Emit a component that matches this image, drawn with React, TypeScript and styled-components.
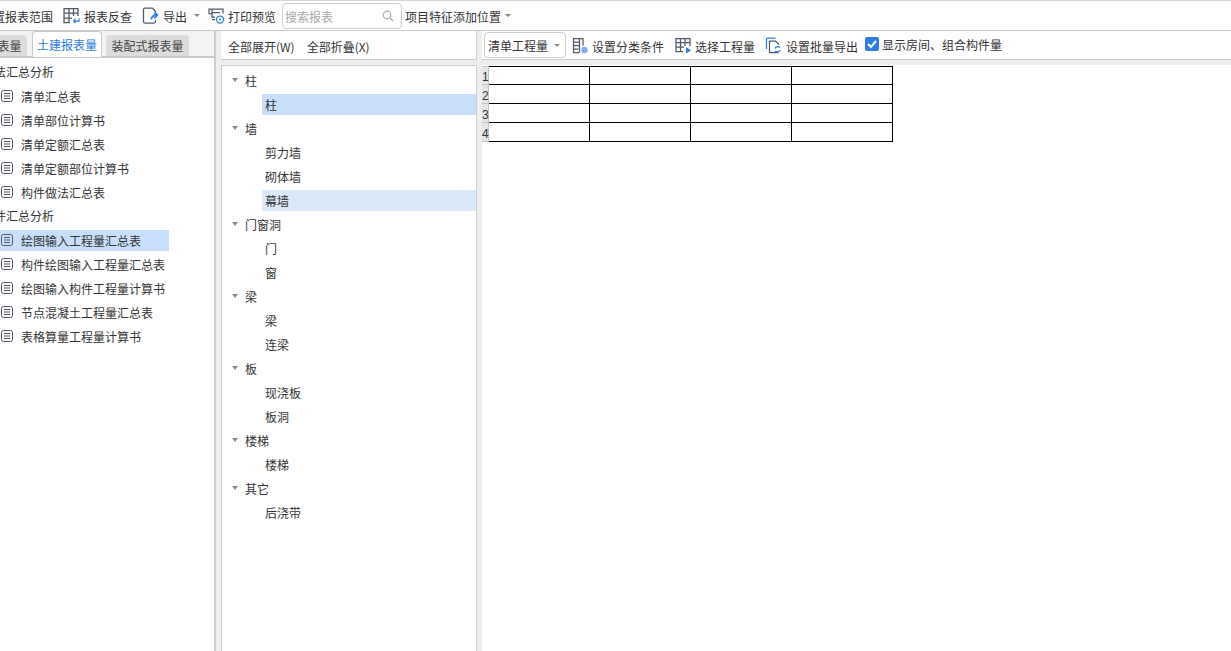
import React from "react";
import styled, { createGlobalStyle } from "styled-components";

const Global = createGlobalStyle`
  html, body { margin: 0; padding: 0; background: #fff; }
  * { box-sizing: border-box; }
  body { font-family: "Noto Sans CJK SC", "Liberation Sans", sans-serif; font-size: 12px; color: #333; }
`;

const Page = styled.div`
  width: 1231px; height: 651px; overflow: hidden; display: flex; flex-direction: column; background: #fff;
`;
const TopBar = styled.div`
  height: 30px; flex: none; display: flex; align-items: center;
  border-top: 1px solid #d4d4d4; margin-left: -19px; white-space: nowrap;
`;
const ToolText = styled.span<{ $ml?: number; $mr?: number; $mt?: number }>`
  margin-left: ${p => p.$ml ?? 0}px; margin-right: ${p => p.$mr ?? 0}px; margin-top: ${p => p.$mt ?? 2}px; line-height: 16px; color: #333;
`;
const ToolIcon = styled.svg<{ $ml?: number }>`
  width: 17px; height: 17px; flex: none; margin-left: ${p => p.$ml ?? 0}px;
  fill: none; stroke: #50586a; stroke-width: 1.25;
`;
const Caret = styled.i<{ $ml?: number }>`
  display: block; width: 0; height: 0; flex: none; margin-left: ${p => p.$ml ?? 0}px;
  border: 3px solid transparent; border-top: 3px solid #888; border-bottom: 0;
`;
const Search = styled.div`
  width: 120px; height: 26px; margin-left: 6px; flex: none; display: flex; align-items: center; justify-content: space-between;
  padding: 1px 7px 0 2px; border: 1px solid #ccc; border-radius: 4px; color: #aaa;
`;
const Body = styled.div`
  flex: 1; display: flex; background: #eee; border-top: 1px solid #c8cacd; min-height: 0;
`;
const Left = styled.div`
  width: 216px; flex: none; display: flex; flex-direction: column; background: #fff; overflow: hidden;
  border-right: 2px solid #cdcdcd;
`;
const Tabs = styled.div`
  height: 27px; flex: none; display: flex; align-items: flex-end; margin-left: -20px;
  border-bottom: 2px solid #c8c8c8; background: #f3f3f3;
`;
const Tab = styled.div<{ $active?: boolean }>`
  height: ${p => (p.$active ? 26 : 21)}px; margin-right: ${p => (p.$active ? 4 : 5)}px; padding: 0 ${p => (p.$active ? 4 : 5.5)}px; flex: none; display: flex; align-items: center;
  border-radius: 4px 4px 0 0; position: relative;
  background: ${p => (p.$active ? "#fff" : "#dcdcdc")};
  color: ${p => (p.$active ? "#2a7de1" : "#444")};
  border: ${p => (p.$active ? "1px solid #c8c8c8" : "none")};
  border-bottom: none; margin-bottom: ${p => (p.$active ? -1 : 0)}px;
`;
const TreeList = styled.div`
  padding-top: 2px; display: flex; flex-direction: column;
`;
const Group = styled.div`
  height: 24px; line-height: 24px; margin-left: -18px; white-space: nowrap; color: #333;
`;
const Report = styled.div`
  height: 24px; display: flex; align-items: center; white-space: nowrap;
`;
const ReportInner = styled.div<{ $sel?: boolean }>`
  height: 21px; width: 169px; display: flex; align-items: center; gap: 8px; padding-left: 1px;
  background: ${p => (p.$sel ? "#c7dffa" : "transparent")}; overflow: visible;
`;
const DocIcon = styled.svg`
  width: 12px; height: 12px; flex: none; fill: none; stroke: #4e5567; stroke-width: 1;
`;
const Gap = styled.div<{ $w: number }>`
  width: ${p => p.$w}px; flex: none;
`;
const Middle = styled.div`
  width: 256px; flex: none; display: flex; flex-direction: column;
`;
const MidHead = styled.div`
  height: 29px; flex: none; background: #fff; display: flex; align-items: center; gap: 12px; padding: 2px 0 0 7px;
  border-bottom: 1px solid #cdcdcd; border-right: 1px solid #cdcdcd; margin-bottom: 5px;
`;
const MidTree = styled.div`
  flex: 1; background: #fff; border: 1px solid #cdcdcd; border-bottom: none; padding-top: 2px;
`;
const Node = styled.div<{ $child?: boolean }>`
  height: 24px; display: flex; align-items: center; padding-left: ${p => (p.$child ? 40 : 10)}px;
`;
const NodeSel = styled.div<{ $tone?: string }>`
  flex: 1; height: 21px; line-height: 21px; padding-left: 3px; background: ${p => p.$tone ?? "transparent"};
`;
const NodeCaret = styled(Caret)`
  border-width: 4px 3.5px 0; margin-right: 7px; border-top-color: #888;
`;
const Right = styled.div`
  flex: 1; margin-left: 5px; background: #fff; display: flex; flex-direction: column; min-width: 0;
`;
const RightBar = styled.div`
  height: 29px; flex: none; display: flex; align-items: center; padding-left: 2px; white-space: nowrap; background: #fff;
  border-bottom: 1px solid #cdcdcd;
`;
const Band = styled.div`
  height: 5px; flex: none; background: #eee;
`;
const SelectBox = styled.div`
  width: 82px; height: 26px; flex: none; display: flex; align-items: center; justify-content: space-between;
  padding: 1px 5px 0 3px; border: 1px solid #ccc; border-radius: 4px;
`;
const Check = styled.span`
  width: 14px; height: 14px; margin-left: 7px; margin-top: -2px; flex: none; border-radius: 2px; background: #2b7de9;
  display: flex; align-items: center; justify-content: center;
`;
const Sheet = styled.table`
  border-collapse: collapse; table-layout: fixed; width: 411px; margin-top: 1px; margin-left: 0;
`;
const Num = styled.td`
  width: 6px; padding: 0; background: #e6e6e6; border: 1px solid #c4c4c4; border-left: none; vertical-align: bottom;
  font: 12px/14px "Liberation Sans", sans-serif; overflow: visible; white-space: nowrap; color: #333;
`;
const Cell = styled.td`
  width: 101px; padding: 0; border: 1px solid #000;
`;
const Row = styled.tr<{ $h: number }>`
  height: ${p => p.$h}px;
`;

const Doc = () => (
  <DocIcon viewBox="0 0 12 12">
    <rect x="0.5" y="0.5" width="11" height="11" rx="2" />
    <path d="M3 3.500h6M3 6h6M3 8.500h6" />
  </DocIcon>
);

const reportsA = ["清单汇总表", "清单部位计算书", "清单定额汇总表", "清单定额部位计算书", "构件做法汇总表"];
const reportsB = ["绘图输入工程量汇总表", "构件绘图输入工程量汇总表", "绘图输入构件工程量计算书", "节点混凝土工程量汇总表", "表格算量工程量计算书"];
const tree: [string, string[]][] = [
  ["柱", ["柱"]],
  ["墙", ["剪力墙", "砌体墙", "幕墙"]],
  ["门窗洞", ["门", "窗"]],
  ["梁", ["梁", "连梁"]],
  ["板", ["现浇板", "板洞"]],
  ["楼梯", ["楼梯"]],
  ["其它", ["后浇带"]],
];
const tone = (g: string, c: string) =>
  g === "柱" ? "#c7dffa" : c === "幕墙" ? "#dbe8fa" : undefined;

export default function App() {
  return (
    <Page>
      <Global />
      <TopBar>
        <ToolText>设置报表范围</ToolText>
        <ToolIcon $ml={10} viewBox="0 0 17 17">
          <path d="M7 15.500H1v-14h14V9M1 6h14M1 11h8M6 1.500v14M10.500 1.500V9" />
          <path d="M10.500 14h5.500v-2.500M10.500 14l2-2M10.500 14l2 2" stroke="#2a7de1" />
        </ToolIcon>
        <ToolText $ml={4}>报表反查</ToolText>
        <ToolIcon $ml={10} viewBox="0 0 17 17">
          <path d="M10.500 1H3a1.500 1.500 0 0 0-1.500 1.500v12A1.500 1.500 0 0 0 3 16h9a1.500 1.500 0 0 0 1.500-1.500V13M10.500 1l3 3.500v1" />
          <path d="M9 12.500c.4-3 2.500-4.500 5-4.500M13 5.500l2.800 2.500-2.800 2.800z" stroke="#2a7de1" fill="#2a7de1" strokeWidth="1.200" />
        </ToolIcon>
        <ToolText $ml={4}>导出</ToolText>
        <Caret $ml={7} />
        <ToolIcon $ml={8} viewBox="0 0 17 17">
          <path d="M4 6.500H1V2h14v4.500M4 2v8h3M4 5.500h8M4 12.500h3" />
          <circle cx="12" cy="12.500" r="3.500" stroke="#2a7de1" />
          <circle cx="12" cy="12.500" r="1.100" fill="#2a7de1" stroke="none" />
        </ToolIcon>
        <ToolText $ml={3}>打印预览</ToolText>
        <Search>
          搜索报表
          <svg width="12" height="12" viewBox="0 0 12 12" fill="none" stroke="#aaa" strokeWidth="1.200">
            <circle cx="5" cy="5" r="3.800" />
            <path d="M8 8l3 3" />
          </svg>
        </Search>
        <ToolText $ml={3}>项目特征添加位置</ToolText>
        <Caret $ml={4} />
      </TopBar>
      <Body>
        <Left>
          <Tabs>
            <Tab>报表量</Tab>
            <Tab $active>土建报表量</Tab>
            <Tab>装配式报表量</Tab>
          </Tabs>
          <TreeList>
            <Group>做法汇总分析</Group>
            {reportsA.map(r => (
              <Report key={r}>
                <ReportInner><Doc />{r}</ReportInner>
              </Report>
            ))}
            <Group>构件汇总分析</Group>
            {reportsB.map((r, i) => (
              <Report key={r}>
                <ReportInner $sel={i === 0}><Doc />{r}</ReportInner>
              </Report>
            ))}
          </TreeList>
        </Left>
        <Gap $w={5} />
        <Middle>
          <MidHead>
            <span>全部展开(W)</span>
            <span>全部折叠(X)</span>
          </MidHead>
          <MidTree>
            {tree.map(([g, cs]) => (
              <React.Fragment key={g}>
                <Node><NodeCaret />{g}</Node>
                {cs.map(c => (
                  <Node $child key={c}>
                    <NodeSel $tone={tone(g, c)}>{c}</NodeSel>
                  </Node>
                ))}
              </React.Fragment>
            ))}
          </MidTree>
        </Middle>
        <Right>
          <RightBar>
            <SelectBox>清单工程量<Caret /></SelectBox>
            <ToolIcon $ml={6} viewBox="0 0 17 17">
              <path d="M7 15.500H1.500v-14h9.500v7M1.500 5h6M1.500 8.500h6M1.500 12h5M7.500 1.500v14" />
              <circle cx="12.500" cy="13" r="3.200" fill="#7fb0ea" stroke="none" />
            </ToolIcon>
            <ToolText $ml={3} $mt={3}>设置分类条件</ToolText>
            <ToolIcon $ml={11} viewBox="0 0 17 17">
              <path d="M8 14.500H1v-13h14V9M1 5.500h14M1 10h8M5.500 1.500v13M10 1.500V9" />
              <path d="M11 10l5 3.500-5 3z" fill="#2a7de1" stroke="none" />
            </ToolIcon>
            <ToolText $ml={3} $mt={3}>选择工程量</ToolText>
            <ToolIcon $ml={10} viewBox="0 0 17 17">
              <path d="M1.500 12V2.500a1.500 1.500 0 0 1 1.500-1.500h7.500" stroke="#2a7de1" />
              <path d="M4.500 4h6l3 3v1M4.500 4v11.500h9" />
              <path d="M15 10.500a3 3 0 0 0-5 1M10 14a3 3 0 0 0 5-1" stroke="#2a7de1" strokeWidth="1.300" />
            </ToolIcon>
            <ToolText $ml={4} $mt={3}>设置批量导出</ToolText>
            <Check>
              <svg width="10" height="10" viewBox="0 0 10 10" fill="none" stroke="#fff" strokeWidth="2">
                <path d="M1 5l3 3 5-6" />
              </svg>
            </Check>
            <ToolText $ml={3} $mt={0}>显示房间、组合构件量</ToolText>
          </RightBar>
          <Band />
          <Sheet>
            <tbody>
              {[18, 19, 19, 19].map((h, i) => (
                <Row $h={h} key={i}>
                  <Num>{i + 1}</Num>
                  <Cell /><Cell /><Cell /><Cell />
                </Row>
              ))}
            </tbody>
          </Sheet>
        </Right>
      </Body>
    </Page>
  );
}
